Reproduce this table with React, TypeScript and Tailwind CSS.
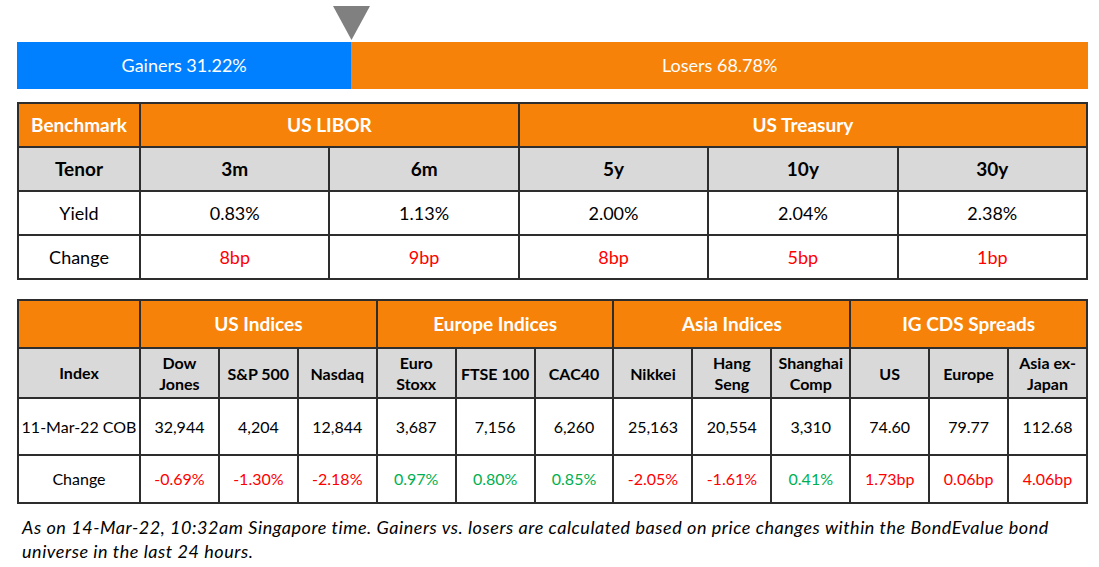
import React from "react";

const FONT = "font-['Lato','Carlito','Liberation_Sans',sans-serif]";

type Tone = "up" | "down" | "plain";

const toneClass = (t: Tone) =>
  t === "down" ? "text-[#ff0000]" : t === "up" ? "text-[#00b050]" : "text-black";

const tenors = ["3m", "6m", "5y", "10y", "30y"];
const yields = ["0.83%", "1.13%", "2.00%", "2.04%", "2.38%"];
const bpChanges = ["8bp", "9bp", "8bp", "5bp", "1bp"];

const groups = ["US Indices", "Europe Indices", "Asia Indices", "IG CDS Spreads"];

const indices: { name: string[]; level: string; change: string; tone: Tone }[] = [
  { name: ["Dow", "Jones"], level: "32,944", change: "-0.69%", tone: "down" },
  { name: ["S&P 500"], level: "4,204", change: "-1.30%", tone: "down" },
  { name: ["Nasdaq"], level: "12,844", change: "-2.18%", tone: "down" },
  { name: ["Euro", "Stoxx"], level: "3,687", change: "0.97%", tone: "up" },
  { name: ["FTSE 100"], level: "7,156", change: "0.80%", tone: "up" },
  { name: ["CAC40"], level: "6,260", change: "0.85%", tone: "up" },
  { name: ["Nikkei"], level: "25,163", change: "-2.05%", tone: "down" },
  { name: ["Hang", "Seng"], level: "20,554", change: "-1.61%", tone: "down" },
  { name: ["Shanghai", "Comp"], level: "3,310", change: "0.41%", tone: "up" },
  { name: ["US"], level: "74.60", change: "1.73bp", tone: "down" },
  { name: ["Europe"], level: "79.77", change: "0.06bp", tone: "down" },
  { name: ["Asia ex-", "Japan"], level: "112.68", change: "4.06bp", tone: "down" },
];

function Cell({ className = "", children }: { className?: string; children?: React.ReactNode }) {
  return <div className={`flex items-center justify-center text-center ${className}`}>{children}</div>;
}

function MoversBar() {
  return (
    <div>
      <div className="flex h-[42px] items-start pt-[6px]">
        <div className="w-[31.22%] shrink-0" />
        <svg width="37" height="34" viewBox="0 0 37 34" className="-ml-[18.5px]">
          <polygon points="0,0 37,0 18.5,34" fill="#808080" />
        </svg>
      </div>
      <div className="flex h-[47px] text-[18px] text-white">
        <div className="flex w-[31.22%] items-center justify-center bg-[#0080ff]">Gainers 31.22%</div>
        <div className="flex flex-1 items-center justify-center bg-[#f7820a]">Losers 68.78%</div>
      </div>
    </div>
  );
}

function RatesTable() {
  return (
    <div className="mt-[13px] grid grid-cols-[120px_repeat(5,minmax(0,1fr))] grid-rows-[42px_42px_42px_42px] gap-[2px] bg-[#2d2d2d] p-[2px] text-[18px]">
      <Cell className="bg-[#f7820a] text-[19px] font-bold text-white">Benchmark</Cell>
      <Cell className="col-span-2 bg-[#f7820a] text-[19px] font-bold text-white">US LIBOR</Cell>
      <Cell className="col-span-3 bg-[#f7820a] text-[19px] font-bold text-white">US Treasury</Cell>

      <Cell className="bg-[#d9d9d9] text-[19px] font-bold">Tenor</Cell>
      {tenors.map(t => (
        <Cell key={t} className="bg-[#d9d9d9] text-[19px] font-bold">{t}</Cell>
      ))}

      <Cell className="bg-white">Yield</Cell>
      {yields.map((y, i) => (
        <Cell key={i} className="bg-white">{y}</Cell>
      ))}

      <Cell className="bg-white">Change</Cell>
      {bpChanges.map((c, i) => (
        <Cell key={i} className="bg-white text-[#ff0000]">{c}</Cell>
      ))}
    </div>
  );
}

function IndicesTable() {
  return (
    <div className="mt-[19px] grid grid-cols-[120px_repeat(12,minmax(0,1fr))] grid-rows-[46px_48px_55px_46px] gap-[2px] bg-[#2d2d2d] p-[2px] text-[16px]">
      <Cell className="bg-[#f7820a]" />
      {groups.map(g => (
        <Cell key={g} className="col-span-3 bg-[#f7820a] text-[19px] font-bold text-white">{g}</Cell>
      ))}

      <Cell className="bg-[#d9d9d9] font-bold">Index</Cell>
      {indices.map((ix, i) => (
        <Cell key={i} className="flex-col bg-[#d9d9d9] font-bold leading-[21px]">
          {ix.name.map(n => (
            <span key={n}>{n}</span>
          ))}
        </Cell>
      ))}

      <Cell className="bg-white">11-Mar-22 COB</Cell>
      {indices.map((ix, i) => (
        <Cell key={i} className="bg-white">{ix.level}</Cell>
      ))}

      <Cell className="bg-white">Change</Cell>
      {indices.map((ix, i) => (
        <Cell key={i} className={`bg-white ${toneClass(ix.tone)}`}>{ix.change}</Cell>
      ))}
    </div>
  );
}

export default function App() {
  return (
    <div className={`h-[567px] w-[1099px] bg-white ${FONT} text-black`}>
      <div className="w-[1088px] pl-[17px]">
        <MoversBar />
        <RatesTable />
        <IndicesTable />
        <p className="mt-[11px] pl-[5px] text-[18px] italic leading-[24px] tracking-[0.55px]">
          As on 14-Mar-22, 10:32am Singapore time. Gainers vs. losers are calculated based on price changes within the BondEvalue bond
          <br />
          universe in the last 24 hours.
        </p>
      </div>
    </div>
  );
}
